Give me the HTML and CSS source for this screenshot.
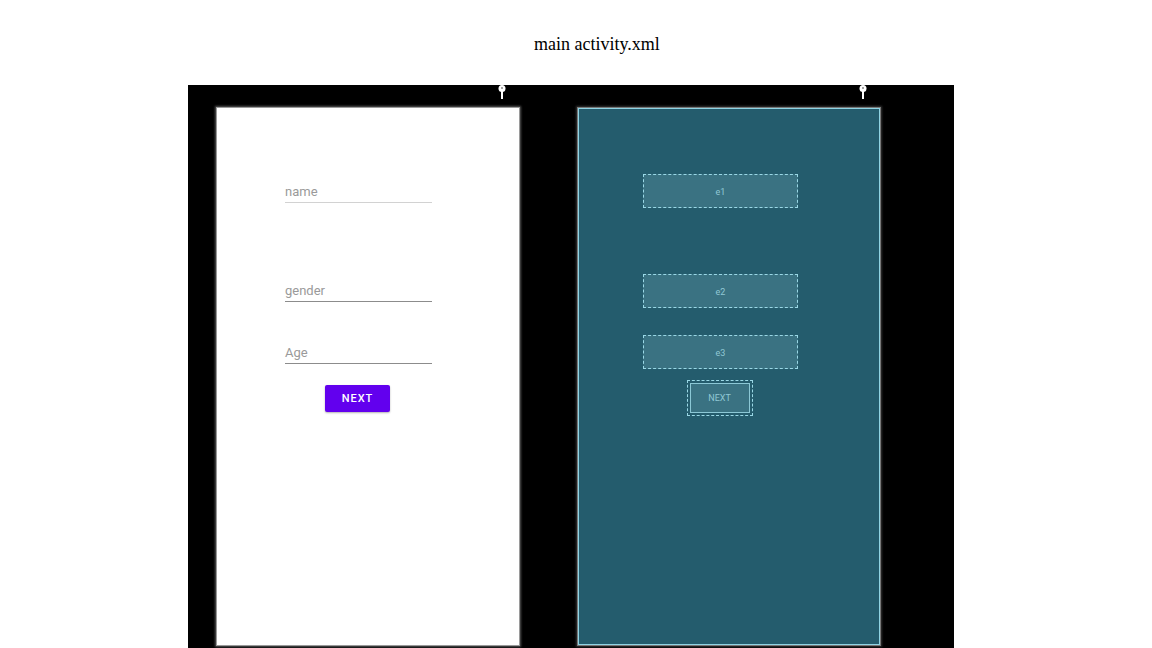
FILE: index.html
```html
<!DOCTYPE html>
<html>
<head>
<meta charset="utf-8">
<link rel="stylesheet" href="styles.css">
</head>
<body>
<h1 class="title">main activity.xml</h1>
<div class="shot">
  <span class="pin pin-left"><svg width="8" height="14" viewBox="0 0 8 14"><circle cx="4" cy="3.5" r="3.5" fill="#fff"/><circle cx="4" cy="3" r="1" fill="#888"/><rect x="3" y="5" width="2" height="9" fill="#fff"/></svg></span>
  <span class="pin pin-right"><svg width="8" height="14" viewBox="0 0 8 14"><circle cx="4" cy="3.5" r="3.5" fill="#fff"/><circle cx="4" cy="3" r="1" fill="#888"/><rect x="3" y="5" width="2" height="9" fill="#fff"/></svg></span>
  <div class="phone design">
    <div class="field field-name"><span>name</span></div>
    <div class="field field-gender"><span>gender</span></div>
    <div class="field field-age"><span>Age</span></div>
    <div class="btn-row"><button class="btn">NEXT</button></div>
  </div>
  <div class="phone blueprint">
    <div class="bp-box bp-e1">e1</div>
    <div class="bp-box bp-e2">e2</div>
    <div class="bp-box bp-e3">e3</div>
    <div class="bp-btn-row"><div class="bp-btn"><div class="bp-btn-inner">NEXT</div></div></div>
  </div>
</div>
</body>
</html>
```

FILE: styles.css
```css
html, body {
  margin: 0;
  padding: 0;
  background: #fff;
  overflow: hidden;
}
.title {
  margin: 0;
  height: 85px;
  box-sizing: border-box;
  padding: 33px 0 0 534px;
  font-family: "Liberation Serif", "Times New Roman", serif;
  font-size: 18px;
  font-weight: normal;
  line-height: 22px;
  color: #000;
}
.shot {
  position: relative;
  margin-left: 188px;
  width: 766px;
  height: 563px;
  background: #000;
  display: flex;
  align-items: flex-start;
  padding: 23px 0 0 29px;
  box-sizing: border-box;
  gap: 59px;
}
.pin {
  position: absolute;
  top: 0;
  width: 8px;
  height: 14px;
  display: block;
}
.pin svg { display: block; }
.pin-left { left: 310px; }
.pin-right { left: 671px; }
.phone {
  width: 302px;
  height: 537px;
  flex: none;
  box-sizing: border-box;
}
.design {
  background: #fff;
  box-shadow: 0 0 0 1px #9a9a9a, 0 0 2px 2px #555;
  padding: 75px 0 0 68px;
  display: flex;
  flex-direction: column;
  align-items: flex-start;
}
.field {
  width: 147px;
  height: 19px;
  border-bottom: 1px solid #8c8c8c;
  font-family: Roboto, "Noto Sans", sans-serif;
  font-size: 13px;
  color: #9a9a9a;
  line-height: 17px;
  box-sizing: content-box;
}
.field span { display: block; }
.field-name { border-bottom-color: #d2d2d2; }
.field-gender { margin-top: 79px; }
.field-age { margin-top: 42px; }
.btn-row {
  width: 147px;
  display: flex;
  justify-content: center;
  margin-top: 21px;
}
.btn {
  width: 65px;
  height: 27px;
  border: none;
  border-radius: 2px;
  background: #6200ee;
  color: #fff;
  font-family: Roboto, "Noto Sans", sans-serif;
  font-weight: 500;
  font-size: 11px;
  letter-spacing: 1px;
  padding: 0;
  box-shadow: 0 1px 2px rgba(0,0,0,0.3);
  position: relative;
  left: -1px;
}
.blueprint {
  background: #245c6d;
  border: 1px solid #8fd3e3;
  box-shadow: 0 0 0 1px #777, 0 0 2px 2px #333;
  padding: 65px 0 0 64px;
  display: flex;
  flex-direction: column;
  align-items: flex-start;
}
.bp-box {
  width: 155px;
  height: 34px;
  box-sizing: border-box;
  background: #3a7282;
  border: 1px dashed #9ad8e6;
  color: #90c8d4;
  font-family: Roboto, "Noto Sans", sans-serif;
  font-size: 9px;
  display: flex;
  align-items: center;
  justify-content: center;
  padding-top: 2px;
}
.bp-e2 { margin-top: 66px; }
.bp-e3 { margin-top: 27px; }
.bp-btn-row {
  width: 155px;
  display: flex;
  justify-content: center;
  margin-top: 11px;
}
.bp-btn {
  width: 66px;
  height: 36px;
  box-sizing: border-box;
  border: 1px dashed #9ad8e6;
  padding: 2px;
  position: relative;
  left: -1px;
}
.bp-btn-inner {
  height: 100%;
  box-sizing: border-box;
  border: 1px solid #8cc8d6;
  background: #3a7282;
  color: #90c8d4;
  font-family: Roboto, "Noto Sans", sans-serif;
  font-size: 9px;
  display: flex;
  align-items: center;
  justify-content: center;
}
```
